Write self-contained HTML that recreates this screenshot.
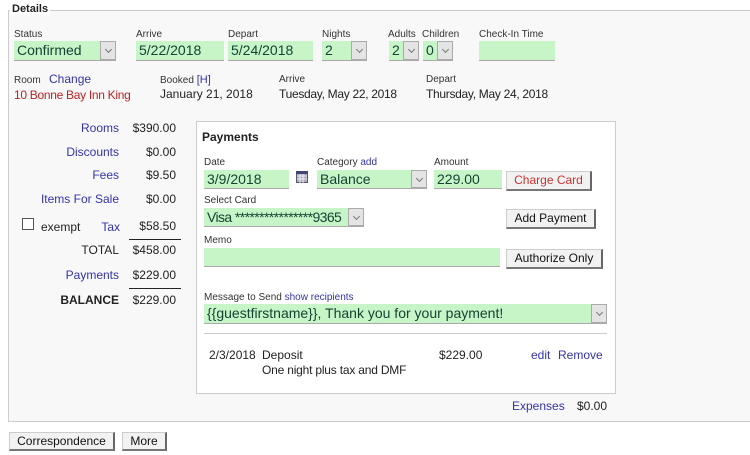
<!DOCTYPE html>
<html><head><style>
*{box-sizing:border-box}
body{margin:0;width:750px;height:455px;background:#fff;font-family:"Liberation Sans",Arial,sans-serif;color:#222;position:relative;overflow:hidden}
.a{position:absolute;white-space:nowrap}
.lbl{font-size:10px;color:#333}
.t{font-size:12px}
.b{color:#33a}
.in{position:absolute;background:#c8f5c8;border-bottom:1px solid #aaa;font-size:14px;padding:1px 3px;line-height:17px;color:#143;overflow:hidden}
.sel .ar{position:absolute;right:0;top:0;bottom:0;width:16px;background:#e4e4e4;border:1px solid #aaa}
.sel .ar:after{content:"";position:absolute;left:5px;top:5px;width:4px;height:4px;border-right:1px solid #777;border-bottom:1px solid #777;transform:rotate(45deg)}
.btn{position:absolute;background:#f2f2f2;border:1px solid #ccc;border-right:2px solid #666;border-bottom:2px solid #777;font-size:12px;text-align:center;line-height:16px;color:#111}
.r{text-align:right}
</style></head><body>
<div class="a" style="left:8px;top:10px;width:745px;height:412px;border:1px solid #ccc;border-right:none;background:#f8f8f8"></div>
<div class="a" style="left:10px;top:3px;background:#fff;font-size:11px;font-weight:bold;padding:0 2px">Details</div>

<div class="a lbl" style="left:14px;top:29px">Status</div>
<div class="a lbl" style="left:136px;top:29px">Arrive</div>
<div class="a lbl" style="left:228px;top:29px">Depart</div>
<div class="a lbl" style="left:322px;top:29px">Nights</div>
<div class="a lbl" style="left:388px;top:29px">Adults</div>
<div class="a lbl" style="left:422px;top:29px">Children</div>
<div class="a lbl" style="left:479px;top:29px">Check-In Time</div>

<div class="in sel" style="left:14px;top:41px;width:102px;height:20px">Confirmed<span class="ar"></span></div>
<div class="in" style="left:136px;top:41px;width:88px;height:20px">5/22/2018</div>
<div class="in" style="left:228px;top:41px;width:85px;height:20px">5/24/2018</div>
<div class="in sel" style="left:322px;top:41px;width:45px;height:20px">2<span class="ar"></span></div>
<div class="in sel" style="left:389px;top:41px;width:30px;height:20px">2<span class="ar"></span></div>
<div class="in sel" style="left:423px;top:41px;width:30px;height:20px">0<span class="ar"></span></div>
<div class="in" style="left:479px;top:41px;width:76px;height:20px"></div>

<div class="a lbl" style="left:14px;top:75px">Room</div>
<div class="a t b" style="left:49px;top:72px">Change</div>
<div class="a t" style="left:14px;top:88px;color:#b22;letter-spacing:-0.3px">10 Bonne Bay Inn King</div>
<div class="a lbl" style="left:160px;top:74px">Booked <span class="b" style="font-size:11px">[H]</span></div>
<div class="a t" style="left:160px;top:87px">January 21, 2018</div>
<div class="a lbl" style="left:279px;top:74px">Arrive</div>
<div class="a t" style="left:279px;top:87px;letter-spacing:-0.3px">Tuesday, May 22, 2018</div>
<div class="a lbl" style="left:426px;top:74px">Depart</div>
<div class="a t" style="left:426px;top:87px;letter-spacing:-0.3px">Thursday, May 24, 2018</div>

<div class="a t b r" style="left:20px;width:99px;top:121px">Rooms</div><div class="a t r" style="left:120px;width:56px;top:121px">$390.00</div>
<div class="a t b r" style="left:20px;width:99px;top:145px">Discounts</div><div class="a t r" style="left:120px;width:56px;top:145px">$0.00</div>
<div class="a t b r" style="left:20px;width:99px;top:168px">Fees</div><div class="a t r" style="left:120px;width:56px;top:168px">$9.50</div>
<div class="a t b r" style="left:20px;width:99px;top:192px">Items For Sale</div><div class="a t r" style="left:120px;width:56px;top:192px">$0.00</div>
<div class="a" style="left:22px;top:218px;width:12px;height:12px;border:1px solid #555;background:#fff"></div>
<div class="a t" style="left:41px;top:220px">exempt</div>
<div class="a t b r" style="left:20px;width:100px;top:220px">Tax</div><div class="a t r" style="left:120px;width:56px;top:219px">$58.50</div>
<div class="a" style="left:129px;top:239px;width:52px;border-top:1px solid #222"></div>
<div class="a t r" style="left:20px;width:99px;top:243px">TOTAL</div><div class="a t r" style="left:120px;width:56px;top:243px">$458.00</div>
<div class="a t b r" style="left:20px;width:99px;top:268px">Payments</div><div class="a t r" style="left:120px;width:56px;top:268px">$229.00</div>
<div class="a" style="left:129px;top:288px;width:52px;border-top:1px solid #222"></div>
<div class="a t r" style="left:20px;width:99px;top:293px;font-weight:bold">BALANCE</div><div class="a t r" style="left:120px;width:56px;top:293px">$229.00</div>

<div class="a" style="left:196px;top:121px;width:420px;height:273px;background:#fff;border:1px solid #ccc"></div>
<div class="a t" style="left:202px;top:130px;font-weight:bold">Payments</div>
<div class="a lbl" style="left:204px;top:157px">Date</div>
<div class="a lbl" style="left:317px;top:157px">Category <span class="b">add</span></div>
<div class="a lbl" style="left:434px;top:157px">Amount</div>
<div class="in" style="left:204px;top:170px;width:85px;height:19px">3/9/2018</div>
<svg class="a" style="left:296px;top:171px" width="12" height="12" viewBox="0 0 12 12"><rect x="0.5" y="0.5" width="11" height="11" fill="#aab" stroke="#557"/><rect x="0" y="0" width="12" height="3" fill="#447"/><path d="M1 5h10M1 8h10M4 3v9M7 3v9" stroke="#fff" stroke-width="0.8"/></svg>
<div class="in sel" style="left:317px;top:170px;width:110px;height:19px">Balance<span class="ar"></span></div>
<div class="in" style="left:434px;top:170px;width:68px;height:19px">229.00</div>
<div class="btn" style="left:506px;top:171px;width:86px;height:20px;color:#c33">Charge Card</div>
<div class="a lbl" style="left:204px;top:195px">Select Card</div>
<div class="in sel" style="left:204px;top:208px;width:160px;height:19px;letter-spacing:-0.6px">Visa ****************9365<span class="ar"></span></div>
<div class="btn" style="left:506px;top:209px;width:90px;height:20px">Add Payment</div>
<div class="a lbl" style="left:204px;top:235px">Memo</div>
<div class="in" style="left:204px;top:248px;width:296px;height:19px"></div>
<div class="btn" style="left:506px;top:249px;width:97px;height:20px">Authorize Only</div>
<div class="a lbl" style="left:204px;top:292px">Message to Send <span class="b">show recipients</span></div>
<div class="in sel" style="left:204px;top:304px;width:403px;height:20px">{{guestfirstname}}, Thank you for your payment!<span class="ar"></span></div>
<div class="a" style="left:204px;top:333px;width:403px;border-top:1px solid #ccc"></div>
<div class="a t" style="left:209px;top:348px">2/3/2018</div>
<div class="a t" style="left:262px;top:348px">Deposit</div>
<div class="a t" style="left:262px;top:363px;letter-spacing:-0.2px">One night plus tax and DMF</div>
<div class="a t" style="left:439px;top:348px">$229.00</div>
<div class="a t b" style="left:531px;top:348px">edit</div>
<div class="a t b" style="left:558px;top:348px">Remove</div>

<div class="a t b" style="left:512px;top:399px">Expenses</div>
<div class="a t" style="left:577px;top:399px">$0.00</div>

<div class="btn" style="left:9px;top:432px;width:106px;height:19px">Correspondence</div>
<div class="btn" style="left:122px;top:432px;width:45px;height:19px">More</div>
</body></html>
